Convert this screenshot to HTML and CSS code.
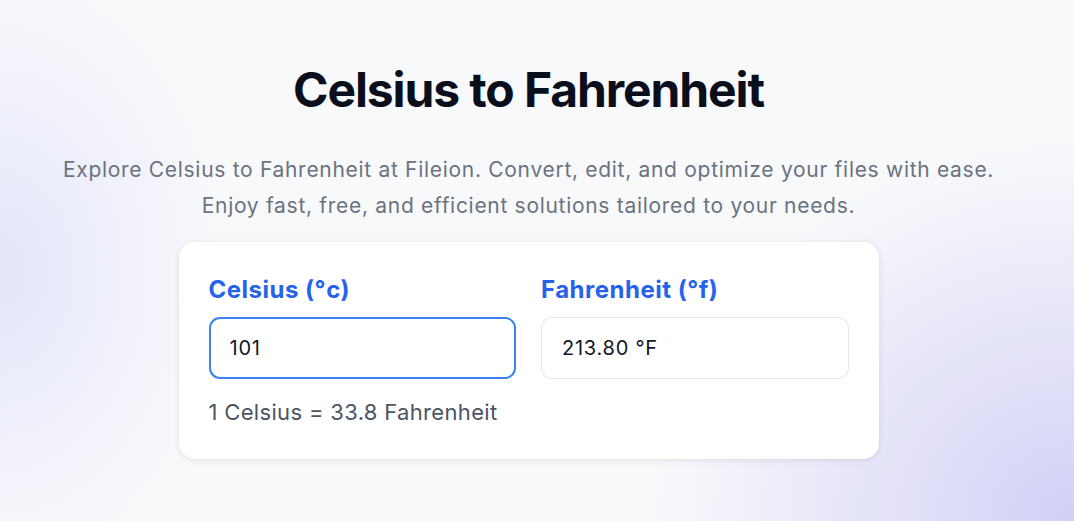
FILE: index.html
```html
<!DOCTYPE html>
<html lang="en">
<head>
    <meta charset="UTF-8">
    <meta name="viewport" content="width=device-width, initial-scale=1.0">
    <title>Celsius to Fahrenheit</title>
    <link rel="stylesheet" href="styles.css">
</head>
<body>
    <div class="page">
        <h1 class="title">Celsius to Fahrenheit</h1>
        <p class="intro">
            Explore Celsius to Fahrenheit at Fileion. Convert, edit, and optimize your files with ease.<br>
            Enjoy fast, free, and efficient solutions tailored to your needs.
        </p>

        <div class="card">
            <div class="fields">
                <div class="field">
                    <label for="celsius">Celsius (°c)</label>
                    <input type="text" id="celsius" class="focused" value="101">
                </div>
                <div class="field">
                    <label for="fahrenheit">Fahrenheit (°f)</label>
                    <input type="text" id="fahrenheit" value="213.80 °F" readonly>
                </div>
            </div>
            <p class="rate">1 Celsius = 33.8 Fahrenheit</p>
        </div>
    </div>
</body>
</html>
```

FILE: styles.css
```css
/* General styling */
* {
    box-sizing: border-box;
}

html, body {
    height: 100%;
}

body {
    margin: 0;
    font-family: Inter, "Noto Sans", Arial, sans-serif;
    background-color: #f8f9fb;
    background-image:
        radial-gradient(ellipse 420px 380px at 100% 100%, rgba(208, 206, 246, 0.95), rgba(208, 206, 246, 0) 100%),
        radial-gradient(ellipse 220px 300px at 0% 52%, rgba(226, 228, 250, 0.9), rgba(226, 228, 250, 0) 100%);
    overflow: hidden;
}

.page {
    padding: 61px 17px 0 0;
    display: flex;
    flex-direction: column;
    align-items: center;
}

.title {
    margin: 0;
    font-size: 48px;
    line-height: 58px;
    font-weight: 700;
    letter-spacing: -1.1px;
    color: #0b0f1c;
}

.intro {
    margin: 33px 0 0;
    font-size: 21px;
    line-height: 36px;
    letter-spacing: 0.7px;
    color: #6b7280;
    text-align: center;
}

/* Converter card */
.card {
    width: 700px;
    margin-top: 18px;
    padding: 32px 30px 33px;
    background-color: #fff;
    border-radius: 16px;
    box-shadow: 0 1px 6px rgba(0, 0, 0, 0.1);
}

.fields {
    display: grid;
    grid-template-columns: 1fr 1fr;
    gap: 25px;
}

.field label {
    display: block;
    font-size: 24px;
    line-height: 32px;
    font-weight: 700;
    letter-spacing: 0.5px;
    color: #2563eb;
    margin-bottom: 11px;
}

.field input {
    display: block;
    width: 100%;
    height: 62px;
    padding: 0 20px;
    font-family: inherit;
    font-size: 20px;
    letter-spacing: 0.75px;
    color: #111827;
    background: #fff;
    border: 1px solid #e2e4e8;
    border-radius: 11px;
    outline: none;
}

.field input.focused {
    border: 2px solid #3b82f6;
    padding: 0 19px;
}

.rate {
    margin: 19px 0 0;
    font-size: 22px;
    line-height: 28px;
    letter-spacing: 0.33px;
    color: #4b5563;
}
```
